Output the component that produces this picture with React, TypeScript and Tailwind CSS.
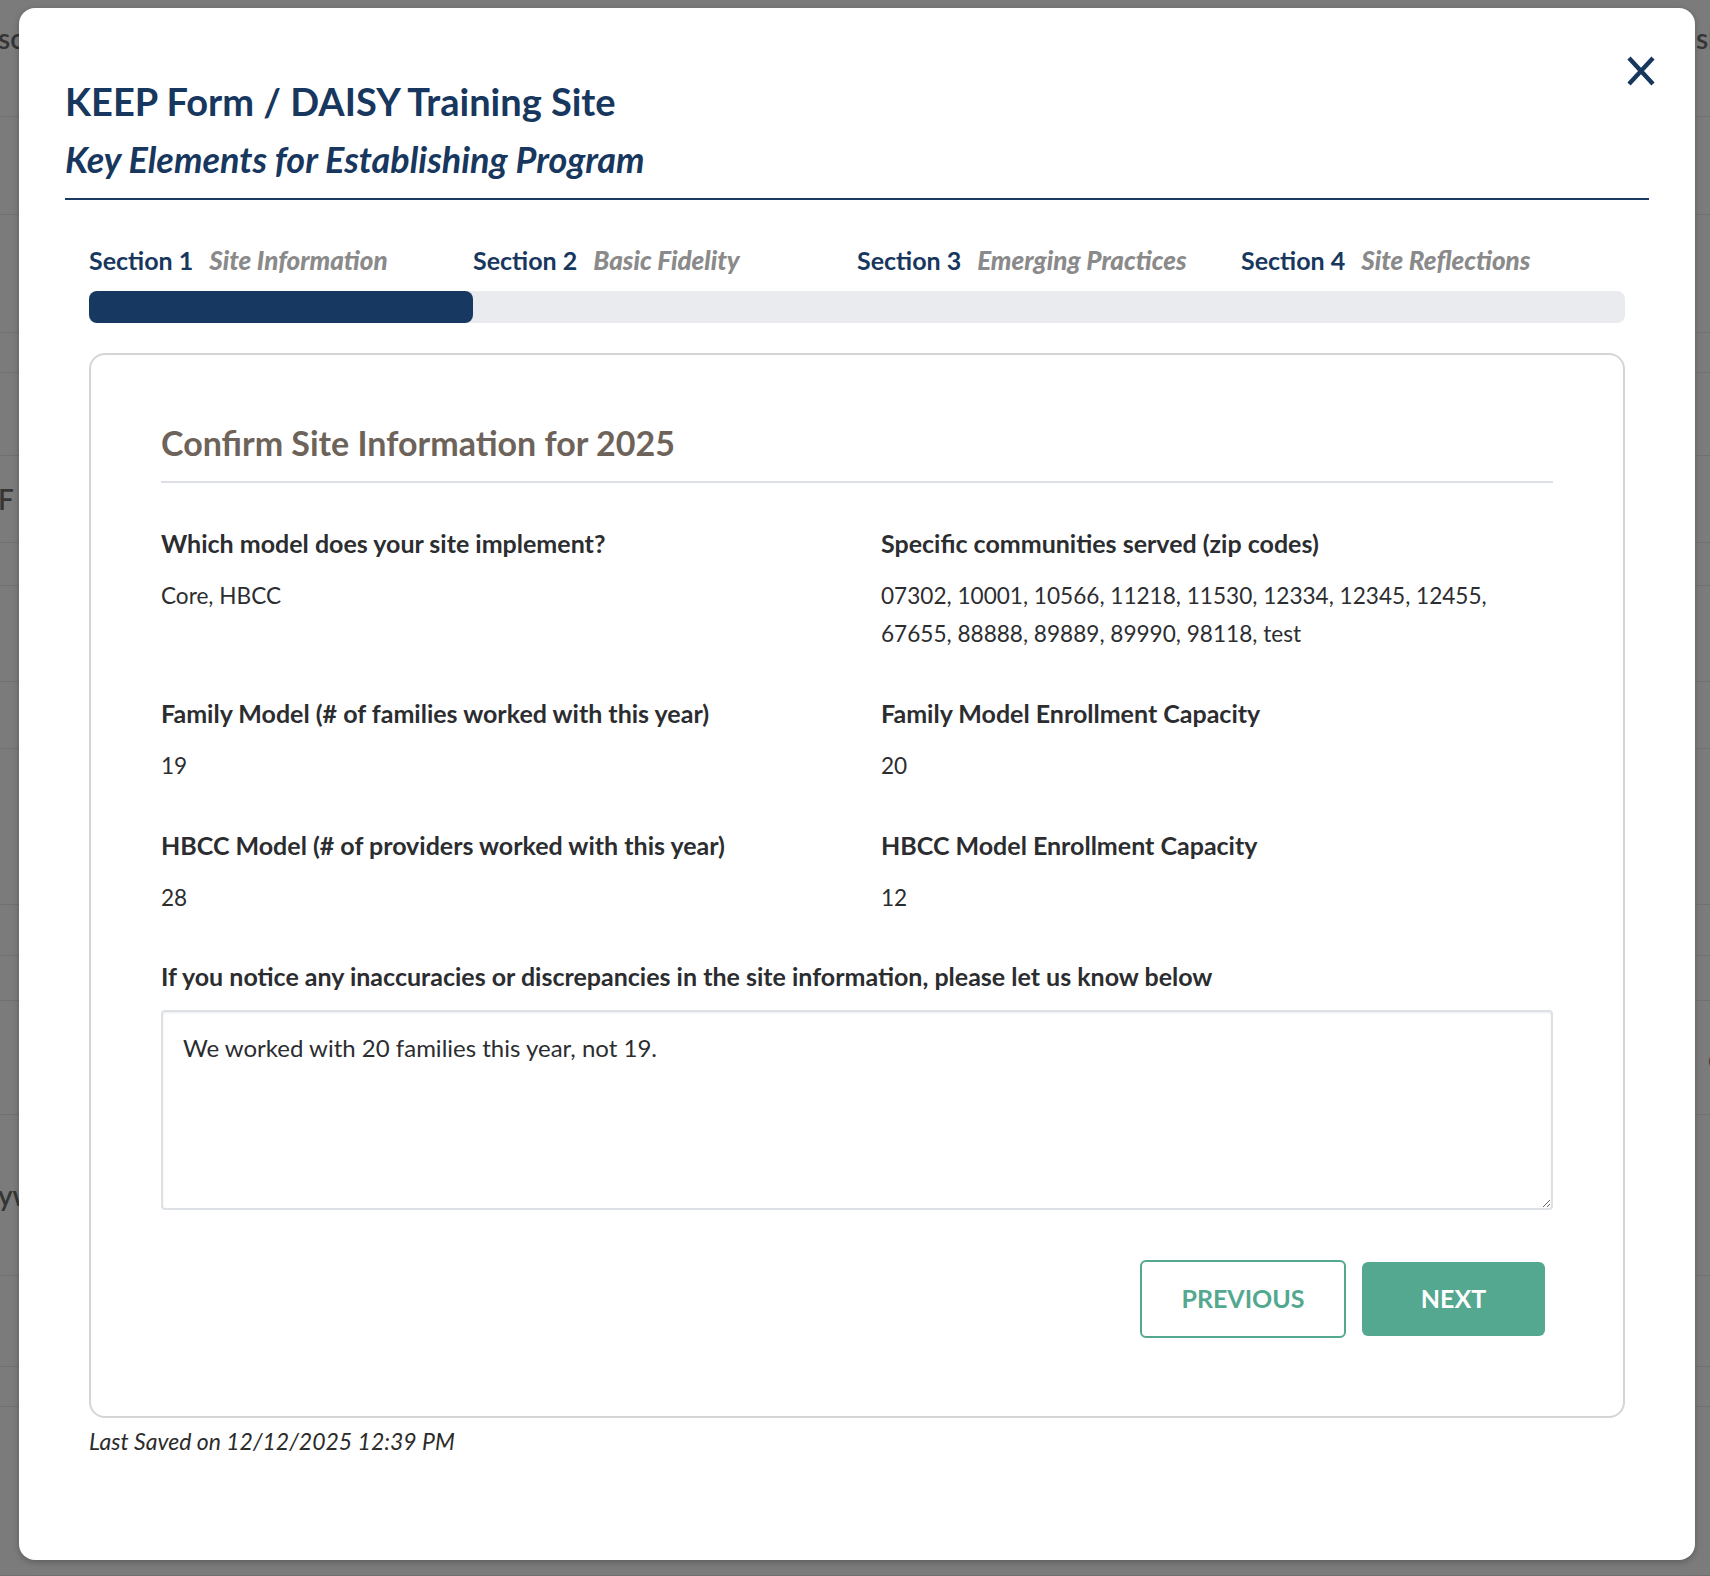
const sections = [
  { num: 1, name: "Site Information" },
  { num: 2, name: "Basic Fidelity" },
  { num: 3, name: "Emerging Practices" },
  { num: 4, name: "Site Reflections" },
];

// rows of the page that sits behind the overlay
const backdropRows = [
  { h: 117, left: "sc", right: "sh", top: true },
  { h: 98 },
  { h: 118 },
  { h: 40 },
  { h: 83 },
  { h: 87, left: "F" },
  { h: 43 },
  { h: 96 },
  { h: 67 },
  { h: 156 },
  { h: 51 },
  { h: 45 },
  { h: 114, right: "o" },
  { h: 161, left: "yw" },
  { h: 91 },
  { h: 40 },
  { h: 169 },
];

type Field = {
  label: string;
  value: string[];
};

const fields: Field[] = [
  { label: "Which model does your site implement?", value: ["Core, HBCC"] },
  {
    label: "Specific communities served (zip codes)",
    value: [
      "07302, 10001, 10566, 11218, 11530, 12334, 12345, 12455,",
      "67655, 88888, 89889, 89990, 98118, test",
    ],
  },
  { label: "Family Model (# of families worked with this year)", value: ["19"] },
  { label: "Family Model Enrollment Capacity", value: ["20"] },
  { label: "HBCC Model (# of providers worked with this year)", value: ["28"] },
  { label: "HBCC Model Enrollment Capacity", value: ["12"] },
];

function FieldBlock({ field }: { field: Field }) {
  return (
    <div>
      <p className="text-[25px] leading-[32px] font-bold text-[#2b2d30]">
        {field.label}
      </p>
      <div className="mt-[18px] text-[22.6px] leading-[38px] text-[#2b2d30]">
        {field.value.map((line) => (
          <p key={line}>{line}</p>
        ))}
      </div>
    </div>
  );
}

export default function App() {
  return (
    <div
      className="relative h-[1576px] w-full overflow-hidden bg-[#7b7b7b]"
      style={{ fontFamily: "Lato, 'Noto Sans', sans-serif" }}
    >
      {/* BACKDROP */}
      <div className="flex flex-col">
        {backdropRows.map((row, i) => (
          <div
            key={i}
            className={
              "flex justify-between border-b border-[#707070] text-[28px] leading-[32px] font-semibold text-[#353535] " +
              (row.top ? "items-start pt-[22px]" : "items-center")
            }
            style={{ height: row.h }}
          >
            <span className="-ml-[2px]">{row.left ?? ""}</span>
            <span className="-mr-[14px]">{row.right ?? ""}</span>
          </div>
        ))}
      </div>

      {/* MODAL */}
      <div className="absolute left-[19px] top-[8px] flex h-[1552px] w-[1676px] flex-col rounded-[16px] bg-white px-[46px] shadow-[0_2px_6px_rgba(0,0,0,0.25)]">

        {/* HEADER */}
        <div className="relative border-b-2 border-[#1b3a63] pt-[70px] pb-[16px]">
          <h1 className="text-[38px] leading-[46px] font-bold text-[#17375e]">
            KEEP Form / DAISY Training Site
          </h1>
          <p className="mt-[12px] text-[36px] leading-[46px] italic font-bold text-[#17375e]">
            Key Elements for Establishing Program
          </p>
          <button className="absolute right-[-7px] top-[48px] text-[#17375e]">
            <svg width="30" height="30" viewBox="0 0 30 30">
              <path d="M3 2 L27 28 M27 2 L3 28" stroke="currentColor" strokeWidth="4.4" />
            </svg>
          </button>
        </div>

        {/* SECTIONS */}
        <div className="mx-[24px] mt-[44px]">
          <div className="grid grid-cols-4">
            {sections.map((s) => (
              <div key={s.num} className="flex items-baseline gap-[16px] text-[25px] leading-[32px]">
                <span className="font-bold text-[#17375e]">Section {s.num}</span>
                <span className="italic font-black text-[26px] text-[#8a8a8a]">{s.name}</span>
              </div>
            ))}
          </div>
          <div className="mt-[15px] h-[32px] rounded-[8px] bg-[#eaebef]">
            <div className="h-full w-1/4 rounded-[8px] bg-[#173961]" />
          </div>
        </div>

        {/* CARD */}
        <div className="mx-[24px] mt-[30px] rounded-[16px] border-2 border-[#d5d5d5] px-[70px] pt-[66px] pb-[78px]">
          <h2 className="border-b-2 border-[#dde1e5] pb-[16px] text-[34px] leading-[44px] font-bold text-[#6e635a]">
            Confirm Site Information for 2025
          </h2>

          <div className="mt-[44px] grid grid-cols-2 gap-x-[48px] gap-y-[44px]">
            {fields.map((f) => (
              <FieldBlock key={f.label} field={f} />
            ))}
          </div>

          <p className="mt-[43px] text-[25px] leading-[32px] font-bold text-[#2b2d30]">
            If you notice any inaccuracies or discrepancies in the site information, please let us know below
          </p>
          <textarea
            className="mt-[18px] block h-[200px] w-full rounded-[4px] border-2 border-[#dde1e5] px-[20px] py-[20px] text-[24px] leading-[32px] text-[#2b2d30] shadow-[inset_0_1px_2px_rgba(0,0,0,0.08)] outline-none"
            defaultValue="We worked with 20 families this year, not 19."
          />

          <div className="mt-[50px] mr-[8px] flex items-center justify-end gap-[16px]">
            <button className="h-[78px] w-[206px] rounded-[6px] border-2 border-[#54a88f] bg-white text-[25px] font-bold text-[#54a88f]">
              PREVIOUS
            </button>
            <button className="h-[74px] w-[183px] rounded-[6px] bg-[#54a88f] text-[25px] font-bold text-white">
              NEXT
            </button>
          </div>
        </div>

        <p className="mx-[24px] mt-[8px] text-[23px] leading-[30px] italic text-[#2b2b2b]">
          Last Saved on 12/12/2025 12:39 PM
        </p>
      </div>
    </div>
  );
}
